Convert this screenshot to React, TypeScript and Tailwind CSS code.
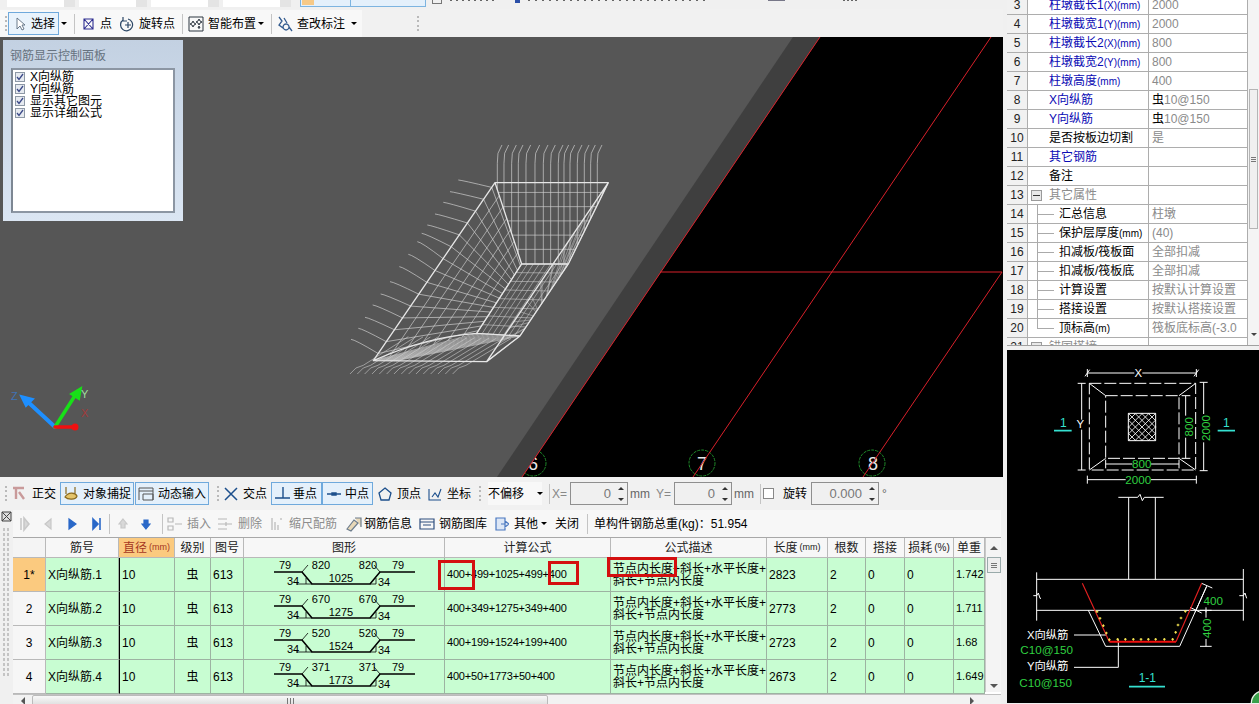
import React from "react";

type P = [number, number];

const lerp = (a: P, b: P, t: number): P => [a[0] + (b[0] - a[0]) * t, a[1] + (b[1] - a[1]) * t];
const pt = (p: P) => `${p[0].toFixed(1)} ${p[1].toFixed(1)}`;

function gridLines(a: P, b: P, c: P, d: P, n: number, from = 0, to = 1) {
  const lines: string[] = [];
  for (let i = 0; i < n; i++) {
    const t = from + ((to - from) * i) / Math.max(n - 1, 1);
    lines.push(`M${pt(lerp(a, b, t))}L${pt(lerp(d, c, t))}`);
  }
  return lines.join("");
}

function Wireframe() {
  const A: P = [465, 128];
  const B: P = [100, 662];
  const C: P = [410, 580];
  const D: P = [545, 372];
  const E: P = [805, 128];
  const F: P = [685, 372];
  const G: P = [540, 588];
  const H: P = [440, 665];
  const hooks: P[] = [[355, 120], [330, 155], [310, 187], [285, 222], [262, 255], [245, 280], [232, 305], [205, 343], [178, 380], [150, 425], [122, 462], [98, 495], [75, 532], [55, 565], [33, 598]];
  const left = hooks
    .map((s, i) => {
      const t = (i + 0.4) / 15;
      const p = lerp(A, B, t);
      return `M${pt(s)}Q${s[0] + 12} ${s[1] + 1} ${pt(p)}L${pt(lerp(D, C, t))}`;
    })
    .join("");
  const xs = [472, 492, 515, 535, 558, 585, 610, 632, 655, 672, 690, 712, 733, 752, 772];
  const back = xs
    .map((x) => {
      const end = x < 545 ? 128 + (x - 465) * 3 : x > 685 ? 128 + (805 - x) * 2.03 : 372;
      return `M${x + 14} 15L${x + 2} 40L${x} 70L${x} ${end}`;
    })
    .join("");
  const frontHooks = Array.from({ length: 15 }, (_, i) => {
    const x = 30 + i * 22;
    return `M${x} 702L${x + 18} 684L${x + 40} 676L${x + 175} ${590 + i * 0.4}`;
  }).join("");
  const front = Array.from({ length: 12 }, (_, i) => {
    const t = i / 11;
    return `M${pt(lerp(B, H, t * 0.2))}L${pt(lerp(C, G, t))}`;
  }).join("");
  return (
    <g transform="translate(340 140) scale(0.3333)" fill="none" strokeLinejoin="round">
      <path d={left + back} stroke="#d4d4d4" strokeWidth="2" />
      <path d={gridLines(A, D, C, B, 7, 0.16, 1) + gridLines(A, D, F, E, 5, 0.12, 0.82)} stroke="#cfcfcf" strokeWidth="2" />
      <path d={gridLines(D, F, G, C, 9) + gridLines(D, C, G, F, 9)} stroke="#c8c8c8" strokeWidth="1.8" />
      <path d={gridLines(E, H, G, F, 10, 0.1, 0.9) + gridLines(F, G, H, E, 10)} stroke="#c4c4c4" strokeWidth="1.6" />
      <path d={frontHooks + front} stroke="#cfcfcf" strokeWidth="1.8" />
      <path
        d="M465 128L805 128L685 372L545 372L465 128L100 662L440 665L540 588L410 580M805 128L440 665M685 372L540 588M545 372L410 580M100 662Q260 590 410 580L540 588"
        stroke="#e6e6e6"
        strokeWidth="4"
      />
    </g>
  );
}

function Canvas() {
  return (
    <div className="relative h-[440px] w-[1003px] overflow-hidden bg-[#565656]">
      <svg className="absolute inset-0" width="1003" height="440" viewBox="0 37 1003 440">
        <polygon points="820,37 1003,37 1003,477 522,477" fill="#000" />
        <g fill="none" stroke="#1f8a2a" strokeWidth="1" strokeDasharray="3 1">
          <circle cx="533" cy="463" r="13" />
          <circle cx="702" cy="463" r="13" />
          <circle cx="872" cy="463" r="13" />
        </g>
        <g fill="#e8e8e8" fontSize="18" textAnchor="middle" fontFamily="Liberation Sans">
          <text x="533" y="470">6</text>
          <text x="702" y="470">7</text>
          <text x="873" y="470">8</text>
        </g>
        <polygon points="793,37 820,37 522,477 497,477" fill="#3f3f3f" />
        <g stroke="#d8202a" strokeWidth="1" fill="none">
          <path d="M820 37L522 477" />
          <path d="M991 37L693 477" />
          <path d="M1002 272L863 477" />
          <path d="M660 272L1002 272" />
        </g>
        <Wireframe />
        <g fill="none" strokeLinecap="round">
          <path d="M55 427L28 402" stroke="#1e8fff" strokeWidth="4" />
          <path d="M21 396L33 399L26 406Z" fill="#1e8fff" stroke="#1e8fff" strokeWidth="2" />
          <path d="M55 427L76 394" stroke="#18e018" strokeWidth="3.5" />
          <path d="M81 388L79 399L71 394Z" fill="#18e018" stroke="#18e018" strokeWidth="2" />
          <path d="M55 427L76 427" stroke="#f01010" strokeWidth="3.5" />
          <circle cx="75" cy="427" r="3.5" fill="#f01010" stroke="none" />
        </g>
        <g fontSize="11" fontFamily="Liberation Sans">
          <text x="11" y="400" fill="#3f73b5">Z</text>
          <text x="81" y="398" fill="#9ddf9d">Y</text>
          <text x="81" y="417" fill="#a33a3a">X</text>
        </g>
      </svg>
      <div className="absolute left-[3px] top-[3px] flex h-[181px] w-[180px] flex-col bg-gradient-to-b from-[#c3d1e2] to-[#dbe6f3] px-[8px]">
        <div className="-ml-px flex h-[28px] items-center pt-[4px] text-[12px] text-[#67727f]">钢筋显示控制面板</div>
        <div className="h-[145px] w-[164px] border-2 border-[#8c96a3] border-l-[#7d8793] bg-white pl-[2px] pt-[1px]">
          {["X向纵筋", "Y向纵筋", "显示其它图元", "显示详细公式"].map((label) => (
            <div key={label} className="flex h-[12px] items-center text-[12px] leading-[12px] text-black">
              <span className="mr-[5px] flex h-[10px] w-[10px] items-center justify-center border border-[#8e99a6] bg-[#e6eaf0]">
                <svg width="8" height="8" viewBox="0 0 8 8">
                  <path d="M1 4L3 6.5L7 1" fill="none" stroke="#3c4a88" strokeWidth="1.3" />
                </svg>
              </span>
              {label}
            </div>
          ))}
        </div>
      </div>
    </div>
  );
}

function Grip({ className = "" }: { className?: string }) {
  return (
    <span className={`flex h-[16px] w-[2px] flex-col justify-between ${className}`}>
      {[0, 1, 2, 3].map((i) => (
        <span key={i} className="h-[2px] w-[2px] bg-[#b9b9b9]" />
      ))}
    </span>
  );
}

const Sep = ({ className = "" }: { className?: string }) => <span className={`h-[20px] w-px bg-[#c4c4c4] ${className}`} />;
const Caret = ({ className = "" }: { className?: string }) => (
  <span className={`h-0 w-0 border-x-[3px] border-t-[3px] border-x-transparent border-t-black ${className}`} />
);

function Icon({ d, w = 16, color = "#1b4f8a", sw = 1.2, fill = "none" }: { d: string; w?: number; color?: string; sw?: number; fill?: string }) {
  return (
    <svg width={w} height="16" viewBox={`0 0 ${w} 16`} className="shrink-0">
      <path d={d} fill={fill} stroke={color} strokeWidth={sw} />
    </svg>
  );
}

function TopStrip() {
  return (
    <div className="flex h-[9px] items-start overflow-hidden bg-[#f0f0f0] pl-[7px]">
      {[0, 1, 2, 3].map((i) => (
        <div key={i} className="mr-[4px] flex h-[7px] w-[68px]">
          <span className="h-full w-[48px] grow bg-white" />
          <span className="h-full w-[11px] bg-[#e4e4e4]" />
        </div>
      ))}
      <div className="ml-[5px] flex h-[7px] w-[51px] border-b border-x border-[#7db4e0] bg-[#e4f0fb] pl-[1px]">
        <span className="h-[5px] w-[12px] bg-[#f6c987]" />
      </div>
      <div className="h-[7px] w-[75px] border-b border-r border-[#7db4e0] bg-[#e4f0fb]" />
      <span className="ml-[6px] h-[4px] w-[10px] border-b border-x border-[#777]" />
      <span className="ml-[8px] h-px w-[46px] bg-[repeating-linear-gradient(90deg,#666_0_2px,transparent_2px_6px)]" />
      <span className="ml-[19px] h-[3px] w-[5px] bg-[#2b4fa8]" />
      <span className="ml-[8px] h-px w-[180px] bg-[repeating-linear-gradient(90deg,#666_0_2px,transparent_2px_7px)]" />
      <span className="ml-[60px] h-px w-[17px] bg-[#778]" />
      <span className="ml-[58px] h-px w-[14px] bg-[repeating-linear-gradient(90deg,#666_0_2px,transparent_2px_4px)]" />
    </div>
  );
}

function MainToolbar() {
  return (
    <div className="flex h-[28px] items-center bg-[#f1f1f1] pt-px text-[12px] text-black">
      <div className="flex h-full w-[362px] shrink-0 items-center bg-[#f8f8f8]">
        <Grip className="ml-[5px]" />
        <div className="ml-[1px] flex h-[23px] w-[51px] items-center border border-[#6fa9dc] bg-[#e9f3fc] pl-[5px]">
          <Icon w={12} d="M3 2L3 13L6 10L8 14L10 13L8 9L11 9Z" color="#5c6d80" sw={0.9} fill="#fff" />
          <span className="ml-[5px]">选择</span>
        </div>
        <Caret className="ml-[2px]" />
        <Sep className="ml-[7px]" />
        <span className="ml-[8px]"><Icon w={11} d="M1 3H10V13H1ZM1 3L10 13M10 3L1 13" color="#2c2c90" sw={1.1} /></span>
        <span className="ml-[6px]">点</span>
        <span className="ml-[8px]"><Icon d="M3 4A6 6 0 1 0 8 3M3 1V5H7M8 6V12M5 9H11" color="#2c4766" sw={1.2} /></span>
        <span className="ml-[3px]">旋转点</span>
        <Sep className="ml-[7px]" />
        <span className="ml-[5px]"><Icon d="M1 1H15V15H1ZM5 5L6 7L8 8L6 9L5 11L4 9L2 8L4 7ZM11 3L12 5L14 6L12 7L11 9L10 7L8 6L10 5ZM11 10L12 12L10 12Z" color="#2d3640" sw={1} /></span>
        <span className="ml-[4px]">智能布置</span>
        <Caret className="ml-[2px]" />
        <Sep className="ml-[7px]" />
        <span className="ml-[5px]"><Icon d="M2 1L5 5L2 9L6 12M7 2L10 7M9 8A3 3 0 1 0 9.1 8M12 11L15 15" color="#335b8f" sw={1.3} /></span>
        <span className="ml-[4px]">查改标注</span>
        <Caret className="ml-[6px]" />
      </div>
      <Grip className="ml-[55px]" />
    </div>
  );
}

function SpinBox({ value, w }: { value: string; w: string }) {
  return (
    <div className={`flex h-[23px] items-center border border-[#8f8f8f] bg-[#f0f0f0] text-[13px] text-[#777] ${w}`}>
      <span className="grow pr-[7px] text-right">{value}</span>
      <span className="mr-[3px] flex h-[14px] flex-col justify-between">
        <span className="h-0 w-0 border-x-[3px] border-b-[3px] border-x-transparent border-b-[#333]" />
        <span className="h-0 w-0 border-x-[3px] border-t-[3px] border-x-transparent border-t-[#333]" />
      </span>
    </div>
  );
}

function SnapToolbar() {
  const btn = "flex h-[23px] items-center border border-[#6fa9dc] bg-[#e4f0fb]";
  return (
    <div className="flex h-[33px] items-center bg-[#f1f1f1] text-[12px] text-black">
      <Grip className="ml-[5px]" />
      <span className="ml-[4px]"><Icon d="M2 2H13M5 2V13M8 6L13 13" color="#c99a9a" sw={2.4} /></span>
      <span className="ml-[5px]">正交</span>
      <div className={`ml-[4px] w-[74px] pl-[2px] ${btn}`}>
        <Icon d="M3 1V8M12 1V8M2 11C5 6 12 6 14 10C13 14 5 14 2 11Z" color="#8a6a20" sw={1.2} fill="#e4c46a" />
        <span className="ml-[4px]">对象捕捉</span>
      </div>
      <div className={`ml-px w-[74px] pl-[2px] ${btn}`}>
        <Icon d="M1 2H15M1 5H15M1 2V14M15 2V14M5 8H15V14H5Z" color="#555" sw={1} />
        <span className="ml-[4px]">动态输入</span>
      </div>
      <Grip className="ml-[8px]" />
      <span className="ml-[4px]"><Icon d="M2 2L14 14M14 2L2 14" color="#1c4f8c" sw={1.5} /></span>
      <span className="ml-[4px]">交点</span>
      <div className={`ml-[4px] w-[51px] pl-[2px] ${btn}`}>
        <Icon d="M9 1V12M1 12H16" color="#1c4f8c" sw={1.4} />
        <span className="ml-[3px]">垂点</span>
      </div>
      <div className={`w-[51px] pl-[3px] ${btn}`}>
        <Icon d="M1 8H15M6 7H10V9H6Z" color="#1c4f8c" sw={1.4} />
        <span className="ml-[3px]">中点</span>
      </div>
      <span className="ml-[4px]"><Icon d="M8 2L14 7L12 14H4L2 7Z" color="#1c4f8c" sw={1.3} /></span>
      <span className="ml-[4px]">顶点</span>
      <span className="ml-[6px]"><Icon d="M2 3V14H14M5 11L8 7L11 11L14 3" color="#1c4f8c" sw={1.1} /></span>
      <span className="ml-[4px]">坐标</span>
      <Grip className="ml-[8px]" />
      <span className="ml-[7px] flex h-[23px] w-[54px] items-center bg-[#f8f8f8]">不偏移</span>
      <Caret className="ml-[-5px]" />
      <Sep className="ml-[6px]" />
      <span className="ml-[2px] w-[15px] text-[#888]">X=</span>
      <SpinBox value="0" w="ml-[3px] w-[58px]" />
      <span className="ml-[2px] w-[22px] text-[#666]">mm</span>
      <span className="ml-[4px] w-[15px] text-[#888]">Y=</span>
      <SpinBox value="0" w="ml-[3px] w-[58px]" />
      <span className="ml-[2px] w-[22px] text-[#666]">mm</span>
      <Sep className="ml-[4px]" />
      <span className="ml-[2px] h-[11px] w-[11px] border border-[#888] bg-white" />
      <span className="ml-[9px]">旋转</span>
      <SpinBox value="0.000" w="ml-[4px] w-[68px]" />
      <span className="ml-[3px] text-[#666]">°</span>
    </div>
  );
}

function ActionBar() {
  const off = "text-[#8d8d8d]";
  return (
    <div className="flex h-[27px] items-center bg-[#f7f7f7] text-[12px] text-black">
      <span className="ml-[7px]"><Icon w={10} d="M1 2V14M4 2V14L9 8Z" color="#c8c8c8" sw={1.6} fill="#d8d8d8" /></span>
      <span className="ml-[14px]"><Icon w={9} d="M7 3L1 8L7 13Z" color="#c8c8c8" fill="#d8d8d8" /></span>
      <span className="ml-[15px]"><Icon w={9} d="M1 3L8 8L1 13Z" color="#2a68c8" fill="#2a68c8" /></span>
      <span className="ml-[15px]"><Icon w={10} d="M1 3L6 8L1 13ZM8 2V14" color="#2a68c8" sw={1.6} fill="#2a68c8" /></span>
      <Sep className="ml-[7px]" />
      <span className="ml-[8px]"><Icon w={10} d="M5 3L9 8H7V12H3V8H1Z" color="#c8c8c8" fill="#d8d8d8" /></span>
      <span className="ml-[13px]"><Icon w={10} d="M5 13L9 8H7V4H3V8H1Z" color="#2a68c8" fill="#2a68c8" /></span>
      <Sep className="ml-[11px]" />
      <span className="ml-[4px]"><Icon d="M1 2H6V6H1ZM1 10H6V14H1ZM8 8H15" color="#b8b8b8" /></span>
      <span className={`ml-[4px] ${off}`}>插入</span>
      <span className="ml-[6px]"><Icon d="M1 3H10M1 13H10M1 8H15M9 6V10" color="#b8b8b8" /></span>
      <span className={`ml-[5px] ${off}`}>删除</span>
      <span className="ml-[9px]"><Icon w={11} d="M1 2V14M4 6V14M7 9V14M10 2V4" color="#b8b8b8" /></span>
      <span className={`ml-[7px] ${off}`}>缩尺配筋</span>
      <span className="ml-[8px]"><Icon w={17} d="M2 13L9 4L13 7L6 15ZM10 2H16V11" color="#6d7d8d" fill="#e8d8b8" /></span>
      <span className="ml-[2px]">钢筋信息</span>
      <span className="ml-[7px]"><Icon d="M1 3H15V13H1ZM1 6H15M4 9H12" color="#2f4f7f" /></span>
      <span className="ml-[4px]">钢筋图库</span>
      <span className="ml-[8px]"><Icon w={14} d="M1 2H10V14H1ZM6 8H10V5L14 8L10 11V8" color="#4a78c0" fill="#dde7f6" /></span>
      <span className="ml-[5px]">其他</span>
      <Caret className="ml-[3px]" />
      <span className="ml-[8px]">关闭</span>
      <Sep className="ml-[8px]" />
      <span className="ml-[6px]">单构件钢筋总重(kg)：51.954</span>
    </div>
  );
}

const cols = "grid grid-cols-[33px_73px_56px_36px_33px_201px_166px_156px_61px_38px_39px_49px_31px]";
const rows = [
  { no: "1*", name: "X向纵筋.1", mid: "1025", side: "820", formula: "400+499+1025+499+400", len: "2823", unit: "1.742" },
  { no: "2", name: "X向纵筋.2", mid: "1275", side: "670", formula: "400+349+1275+349+400", len: "2773", unit: "1.711" },
  { no: "3", name: "X向纵筋.3", mid: "1524", side: "520", formula: "400+199+1524+199+400", len: "2723", unit: "1.68" },
  { no: "4", name: "X向纵筋.4", mid: "1773", side: "371", formula: "400+50+1773+50+400", len: "2673", unit: "1.649" },
];

function BarShape({ side, mid }: { side: string; mid: string }) {
  return (
    <svg width="200" height="33" viewBox="0 0 200 33" className="shrink-0">
      <path d="M30 14H58L68 26H126L136 14H171" fill="none" stroke="#000" strokeWidth="1.6" />
      <path d="M52 26H68M126 26H132M62 20V26M132 20V26M58 14L64 7M136 14L130 7" fill="none" stroke="#000" strokeWidth="0.8" />
      <g fontSize="11" fontFamily="Liberation Sans" fill="#000" textAnchor="middle">
        <text x="41" y="11">79</text>
        <text x="77" y="11">{side}</text>
        <text x="124" y="11">{side}</text>
        <text x="154" y="11">79</text>
        <text x="97" y="24">{mid}</text>
        <text x="49" y="27">34</text>
        <text x="140" y="28">34</text>
      </g>
    </svg>
  );
}

function DataTable() {
  const cell = "flex items-center border-r border-b border-[#9db3a2] bg-[#c8fdd2] px-[2px] text-[12px] text-black";
  const heads = ["筋号", "直径", "级别", "图号", "图形", "计算公式", "公式描述", "长度", "根数", "搭接", "损耗", "单重"];
  return (
    <div className="relative h-[167px] w-[988px] overflow-hidden border-t border-[#a8a8a8] bg-white">
      <div className="flex">
        <div className="w-[972px] overflow-hidden">
          <div className={`${cols} h-[20px] text-[12px] text-[#222]`}>
            <div className="border-r border-b border-[#b9b9b9] bg-[#f4f4f4]" />
            {heads.map((h) => (
              <div
                key={h}
                className={`flex items-center justify-center whitespace-nowrap border-r border-b border-[#b9b9b9] ${h === "直径" ? "bg-[#fbca7f] text-[#a5371f]" : "bg-[#f7f7f7]"}`}
              >
                {h}
                {h === "直径" || h === "长度" ? <span className="ml-[2px] text-[9px]">(mm)</span> : null}
                {h === "损耗" ? <span className="ml-[2px] text-[10px]">(%)</span> : null}
              </div>
            ))}
          </div>
          {rows.map((r, i) => (
            <div key={r.no} className={`${cols} h-[34px]`}>
              <div className={`flex items-center justify-center border-r border-b border-[#b9b9b9] text-[12px] ${i === 0 ? "bg-[#fbca7f]" : "bg-[#f6f6f6]"}`}>{r.no}</div>
              <div className={cell}>{r.name}</div>
              <div className={`${cell} border-l border-l-black ${i === 0 ? "bg-[#b2e8dc]" : ""}`}>10</div>
              <div className={`${cell} justify-center`}>虫</div>
              <div className={cell}>613</div>
              <div className={`${cell} !px-0`}><BarShape side={r.side} mid={r.mid} /></div>
              <div className={`${cell} tracking-[-0.2px] !text-[11px]`}>{r.formula}</div>
              <div className={`${cell} whitespace-nowrap leading-[12px]`}>
                <span>节点内长度+斜长+水平长度+<br />斜长+节点内长度</span>
              </div>
              <div className={cell}>{r.len}</div>
              <div className={cell}>2</div>
              <div className={cell}>0</div>
              <div className={cell}>0</div>
              <div className={`${cell} whitespace-nowrap !text-[11px]`}>{r.unit}</div>
            </div>
          ))}
        </div>
        <div className="flex h-[154px] w-[16px] flex-col items-center border-l border-[#c8c8c8] bg-[#f4f4f4]">
          <span className="mt-[8px] h-0 w-0 border-x-[4px] border-b-[4px] border-x-transparent border-b-[#555]" />
          <span className="mt-[7px] flex h-[16px] w-[14px] flex-col justify-center gap-px border border-[#9aa] bg-[#eee] px-[3px]">
            <span className="h-px bg-[#777]" />
            <span className="h-px bg-[#777]" />
            <span className="h-px bg-[#777]" />
          </span>
          <span className="mt-auto mb-[4px] h-0 w-0 border-x-[4px] border-t-[4px] border-x-transparent border-t-[#555]" />
        </div>
      </div>
      <div className="flex h-[13px] items-center border-t border-[#c0c0c0] bg-[#f2f2f2]">
        <span className="ml-[8px] h-0 w-0 border-y-[4px] border-r-[4px] border-y-transparent border-r-[#555]" />
        <span className="ml-[7px] flex h-[12px] w-[516px] items-center justify-center rounded-[2px] border border-[#bbb] bg-gradient-to-b from-[#f8f8f8] to-[#dcdcdc]">
          <span className="flex h-[6px] w-[7px] justify-between">
            <span className="w-px bg-[#777]" />
            <span className="w-px bg-[#777]" />
            <span className="w-px bg-[#777]" />
          </span>
        </span>
        <span className="ml-[422px] h-0 w-0 border-y-[4px] border-l-[4px] border-y-transparent border-l-[#555]" />
      </div>
      <span className="absolute left-[425px] top-[22px] h-[30px] w-[37px] border-[3px] border-[#d40f0f]" />
      <span className="absolute left-[535px] top-[23px] h-[24px] w-[31px] border-[3px] border-[#d40f0f]" />
      <span className="absolute left-[594px] top-[19px] h-[20px] w-[70px] border-[3px] border-[#d40f0f]" />
    </div>
  );
}

const propRows: { n: number; name?: React.ReactNode; value?: string; kind: "blue" | "black" | "group" | "child"; }[] = [
  { n: 3, name: <>柱墩截长1<span className="text-[10px]">(X)(mm)</span></>, value: "2000", kind: "blue" },
  { n: 4, name: <>柱墩截宽1<span className="text-[10px]">(Y)(mm)</span></>, value: "2000", kind: "blue" },
  { n: 5, name: <>柱墩截长2<span className="text-[10px]">(X)(mm)</span></>, value: "800", kind: "blue" },
  { n: 6, name: <>柱墩截宽2<span className="text-[10px]">(Y)(mm)</span></>, value: "800", kind: "blue" },
  { n: 7, name: <>柱墩高度<span className="text-[10px]">(mm)</span></>, value: "400", kind: "blue" },
  { n: 8, name: "X向纵筋", value: "虫10@150", kind: "blue" },
  { n: 9, name: "Y向纵筋", value: "虫10@150", kind: "blue" },
  { n: 10, name: "是否按板边切割", value: "是", kind: "black" },
  { n: 11, name: "其它钢筋", kind: "blue" },
  { n: 12, name: "备注", kind: "black" },
  { n: 13, name: "其它属性", kind: "group" },
  { n: 14, name: "汇总信息", value: "柱墩", kind: "child" },
  { n: 15, name: <>保护层厚度<span className="text-[10px]">(mm)</span></>, value: "(40)", kind: "child" },
  { n: 16, name: "扣减板/筏板面", value: "全部扣减", kind: "child" },
  { n: 17, name: "扣减板/筏板底", value: "全部扣减", kind: "child" },
  { n: 18, name: "计算设置", value: "按默认计算设置", kind: "child" },
  { n: 19, name: "搭接设置", value: "按默认搭接设置", kind: "child" },
  { n: 20, name: <>顶标高<span className="text-[10px]">(m)</span></>, value: "筏板底标高(-3.0", kind: "child" },
  { n: 21, name: "锚固搭接", kind: "group" },
];

function PropertyGrid() {
  return (
    <div className="flex h-[346px] w-[252px] overflow-hidden border-b border-[#a0a0a0] bg-white">
      <div className="w-[241px] shrink-0 overflow-hidden">
        <div className="-mt-[4px]">
          {propRows.map((r) => (
            <div key={r.n} className="flex h-[19px] text-[12px]">
              <div className="flex w-[21px] shrink-0 items-center justify-center border-b border-r border-[#adadad] bg-[#f1f1f1] text-[#222]">{r.n}</div>
              <div
                className={`relative flex w-[121px] shrink-0 items-center whitespace-nowrap border-b border-r border-[#adadad] ${
                  r.kind === "blue" ? "pl-[21px] text-[#0a0ab4]" : r.kind === "group" ? "pl-[21px] text-[#8c8c8c]" : r.kind === "child" ? "pl-[31px] text-black" : "pl-[21px] text-black"
                }`}
              >
                {r.kind === "group" ? (
                  <span className="absolute left-[3px] flex h-[11px] w-[11px] items-center justify-center border border-[#9a9a9a] bg-[#e8e8e8]">
                    <span className="h-px w-[7px] bg-[#333]" />
                  </span>
                ) : null}
                {r.kind === "child" ? (
                  <>
                    <span className={`absolute left-[9px] top-0 w-px bg-[#aaa] ${r.n === 20 ? "h-[10px]" : "h-full"}`} />
                    <span className="absolute left-[9px] top-[9px] h-px w-[17px] bg-[#aaa]" />
                  </>
                ) : null}
                {r.name}
              </div>
              <div className="flex w-[99px] shrink-0 items-center overflow-hidden whitespace-nowrap border-b border-r border-[#adadad] pl-[3px] text-[#8a8a8a]">
                {r.value?.startsWith("虫") ? (
                  <>
                    <span className="text-black">虫</span>
                    {r.value.slice(1)}
                  </>
                ) : (
                  r.value
                )}
              </div>
            </div>
          ))}
        </div>
      </div>
      <div className="flex h-full grow flex-col items-center bg-[#f4f4f4]">
        <div className="mt-[89px] flex h-[140px] w-[9px] shrink-0 flex-col items-center justify-center gap-px border border-[#b5b5b5] bg-[#f0f0f0]">
          <span className="h-px w-[5px] bg-[#777]" />
          <span className="h-px w-[5px] bg-[#777]" />
          <span className="h-px w-[5px] bg-[#777]" />
        </div>
        <span className="mt-[104px] h-0 w-0 border-x-[3px] border-t-[3px] border-x-transparent border-t-[#444]" />
      </div>
    </div>
  );
}

function SectionDrawing() {
  const dots: P[] = [[276, 788], [285, 808], [295, 830], [304, 852], [313, 872], [338, 871], [361, 871], [385, 871], [408, 871], [430, 871], [452, 871], [478, 871], [503, 871], [512, 850], [519, 828], [528, 807], [541, 787]];
  const hatch: string[] = [];
  for (let i = -60; i <= 60; i += 20) {
    const a0 = Math.max(i, 0);
    const b0 = Math.min(i + 82, 82);
    hatch.push(`M${370 + a0} ${193 + a0 - i}L${370 + b0} ${193 + b0 - i}`);
    hatch.push(`M${452 - a0} ${193 + a0 - i}L${452 - b0} ${193 + b0 - i}`);
  }
  return (
    <svg width="252" height="353" viewBox="6 3 756 1059" className="block bg-black">
      <g fill="none" stroke="#fff" strokeWidth="3">
        <path d="M253 103H572V363H253Z" strokeDasharray="36 9" />
        <path d="M302 140H522V328H302Z" strokeDasharray="36 9" />
        <path d="M253 103L302 140M572 103L522 140M253 363L302 328M572 363L522 328" />
        <path d="M370 193H452V275H370Z" />
        <path d={hatch.join("")} strokeWidth="2.5" />
        <path d="M247 72H388M412 72H574M247 60V84M574 60V84M240 82L254 62M567 82L581 62" />
        <path d="M230 103V212M230 242V363M218 103H242M218 363H242" />
        <path d="M542 140V200M542 266V328M530 140H556M530 328H556" />
        <path d="M596 100V195M596 280V365M584 100H608M584 365H608" />
        <path d="M302 345H382M438 345H522M302 332V358M522 332V358" />
        <path d="M247 392H362M438 392H574M247 380V404M574 380V404" />
        <path d="M371 445V691M451 445V691M340 445H398L405 436L412 455L418 445H476" />
        <path d="M95 691H715M95 784H715M95 670V815M715 660V815M85 740H95L100 732L105 748H108M703 740H715L720 732L725 748" />
        <path d="M250 784L302 892H524L605 712" />
        <path d="M207 858H305M207 955H340V872" />
        <path d="M590 703L622 717M555 775L590 792M605 712L570 790M603 784V806M603 870V892M585 892H620M585 784H620M603 775V790" />
      </g>
      <path d="M232 703L313 878M513 878L590 703" fill="none" stroke="#e02020" strokeWidth="3.5" />
      <path d="M313 878H513" fill="none" stroke="#f01010" strokeWidth="6" />
      <g fill="#ffee55">
        {dots.map((d) => (
          <path key={`${d[0]}-${d[1]}`} d={`M${d[0] - 4} ${d[1] - 1.5}H${d[0] - 1.5}V${d[1] - 4}H${d[0] + 1.5}V${d[1] - 1.5}H${d[0] + 4}V${d[1] + 1.5}H${d[0] + 1.5}V${d[1] + 4}H${d[0] - 1.5}V${d[1] + 1.5}H${d[0] - 4}Z`} />
        ))}
      </g>
      <g fill="#30d040" fontFamily="Liberation Sans" fontSize="35" textAnchor="middle">
        <text x="410" y="357">800</text>
        <text x="400" y="405">2000</text>
        <text x="625" y="767">400</text>
        <text x="125" y="914">C10@150</text>
        <text x="122" y="1015">C10@150</text>
        <text transform="translate(564 233) rotate(-90)">800</text>
        <text transform="translate(615 237) rotate(-90)">2000</text>
        <text transform="translate(617 838) rotate(-90)">400</text>
      </g>
      <g fill="#fff" fontFamily="Liberation Sans,Noto Sans CJK SC,sans-serif" fontSize="34" textAnchor="middle">
        <text x="400" y="83">X</text>
        <text x="226" y="237">Y</text>
        <text x="128" y="870">X向纵筋</text>
        <text x="128" y="962">Y向纵筋</text>
      </g>
      <g fill="#35e0d0" fontFamily="Liberation Sans" fontSize="36" textAnchor="middle">
        <text x="175" y="235">1</text>
        <text x="664" y="235">1</text>
        <text x="427" y="1000">1-1</text>
      </g>
      <path d="M147 245H200M638 245H690M372 1013H480" fill="none" stroke="#35e0d0" strokeWidth="5" />
      <circle cx="775" cy="1062" r="36" fill="#3aa04a" stroke="#e8f4e8" strokeWidth="4" />
    </svg>
  );
}

export default function App() {
  return (
    <div className="flex h-[704px] w-[1259px] overflow-hidden bg-[#f0f0f0] font-['Liberation_Sans','Noto_Sans_CJK_SC',sans-serif]">
      <div className="flex w-[1003px] shrink-0 flex-col">
        <TopStrip />
        <MainToolbar />
        <Canvas />
        <SnapToolbar />
        <div className="flex">
          <div className="relative w-[13px] shrink-0">
            <svg width="12" height="12" viewBox="0 0 12 12" className="ml-[1px] mt-[1px]">
              <path d="M1 1H10V10H1ZM1 1L10 10M10 1L1 10" fill="#ddd" stroke="#444" strokeWidth="1" />
            </svg>
            <div className="ml-[2px] mt-[4px] h-[150px] w-[8px] bg-[radial-gradient(#c4c4c4_1px,transparent_1px)] bg-[length:4px_5px]" />
          </div>
          <div className="flex flex-col">
            <ActionBar />
            <DataTable />
          </div>
        </div>
      </div>
      <div className="ml-[4px] flex w-[252px] flex-col">
        <PropertyGrid />
        <div className="mt-[4px]">
          <SectionDrawing />
        </div>
      </div>
    </div>
  );
}
